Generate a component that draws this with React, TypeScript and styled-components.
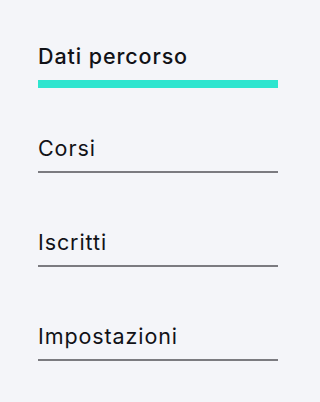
import React from "react";
import styled, { createGlobalStyle } from "styled-components";

const Global = createGlobalStyle`
  html, body { margin: 0; padding: 0; background: #f4f5f9; }
  body { font-family: Inter, "Noto Sans", sans-serif; }
`;

const Page = styled.div`
  width: 316px;
  height: 402px;
  background: #f4f5f9;
  padding: 44px 0 0 38px;
  box-sizing: border-box;
`;

const Nav = styled.nav`
  width: 240px;
  display: flex;
  flex-direction: column;
  gap: 57px;
`;

const Item = styled.a<{ $active?: boolean }>`
  display: block;
  color: #111217;
  text-decoration: none;
  font-size: 21.5px;
  line-height: 24px;
  font-weight: ${(p) => (p.$active ? 500 : 400)};
  letter-spacing: 0.9px;
  padding-bottom: ${(p) => (p.$active ? "12px" : "11px")};
  border-bottom: ${(p) => (p.$active ? "8px solid #2ee5cf" : "2px solid #7b7b80")};
  margin-bottom: ${(p) => (p.$active ? "-9px" : "0")};
  cursor: pointer;
`;

const items = ["Corsi", "Iscritti", "Impostazioni"];

export default function App() {
  return (
    <Page>
      <Global />
      <Nav>
        <Item $active>Dati percorso</Item>
        {items.map((t) => (
          <Item key={t}>{t}</Item>
        ))}
      </Nav>
    </Page>
  );
}
